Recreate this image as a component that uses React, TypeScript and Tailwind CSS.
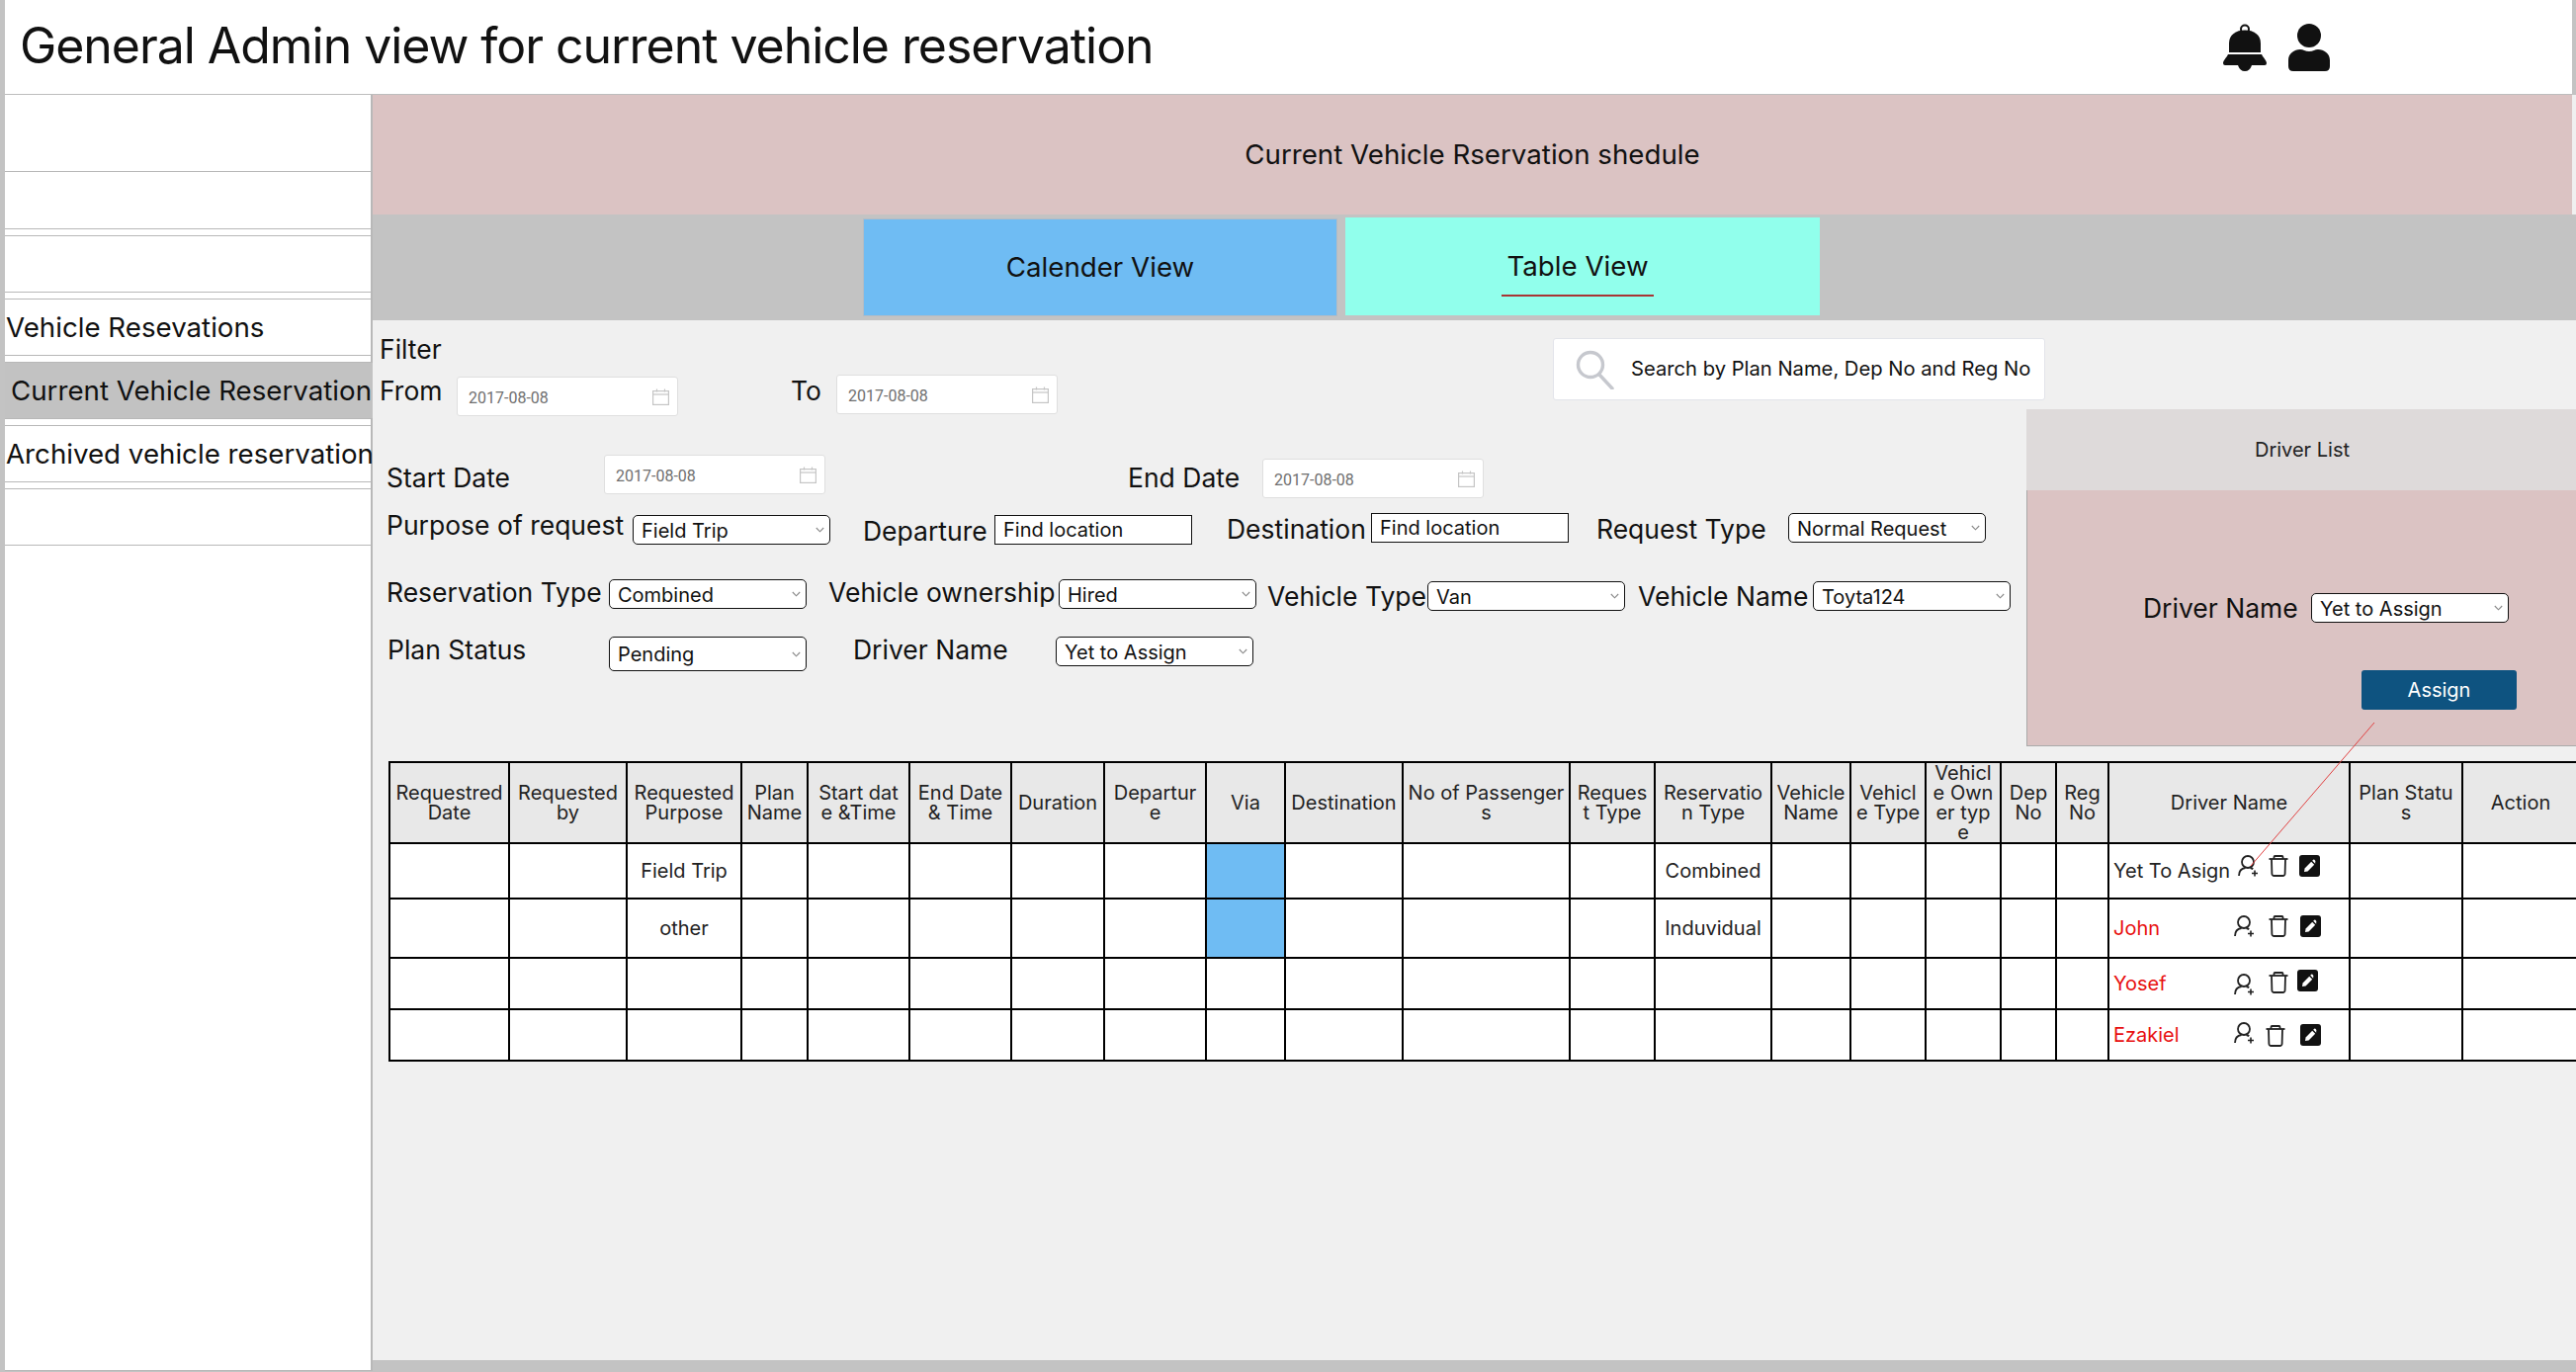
const sans = "font-['Liberation_Sans',Arial,sans-serif]";
const inter = "font-['Inter',sans-serif]";
const roboto = "font-['Roboto',sans-serif]";

const headers = [
  ["Requestred Date", "w-[121px] px-[3px]"],
  ["Requested by", "w-[119px] px-[3px]"],
  ["Requested Purpose", "w-[116px] px-[3px]"],
  ["Plan Name", "w-[67px] px-[3px]"],
  ["Start date &Time", "w-[103px] px-[5px]"],
  ["End Date & Time", "w-[103px] px-[3px]"],
  ["Duration", "w-[94px] px-[3px]"],
  ["Departure", "w-[103px] px-[5px]"],
  ["Via", "w-[80px] px-[3px]"],
  ["Destination", "w-[119px] px-[3px]"],
  ["No of Passengers", "w-[169px] px-[3px]"],
  ["Request Type", "w-[86px] px-[5px]"],
  ["Reservation Type", "w-[118px] px-[3px]"],
  ["Vehicle Name", "w-[80px] px-[3px]"],
  ["Vehicle Type", "w-[76px] px-[3px]"],
  ["Vehicle Owner type", "w-[76px] px-[5px]"],
  ["Dep No", "w-[56px] px-[3px]"],
  ["Reg No", "w-[53px] px-[3px]"],
  ["Driver Name", "w-[244px] px-[3px]"],
  ["Plan Status", "w-[114px] px-[5px]"],
  ["Action", "w-[118px] px-[3px]"],
];

const rows = [
  {
    height: "h-[54px]",
    purpose: "Field Trip",
    type: "Combined",
    via: true,
    driver: "Yet To Asign",
    driverColor: "text-[#222]",
    user: "ml-[4px] mt-[11px]",
    trash: "ml-[10px] mt-[11px]",
    edit: "ml-[11px] mt-[11px]",
  },
  {
    height: "h-[58px]",
    purpose: "other",
    type: "Induvidual",
    via: true,
    driver: "John",
    driverColor: "text-[#e81010]",
    user: "mt-[16px]",
    trash: "ml-[14px] mt-[16px]",
    edit: "ml-[12px] mt-[16px]",
  },
  {
    height: "h-[50px]",
    purpose: "",
    type: "",
    via: false,
    driver: "Yosef",
    driverColor: "text-[#e81010]",
    user: "mt-[15px]",
    trash: "ml-[14px] mt-[13px]",
    edit: "ml-[9px] mt-[11px]",
  },
  {
    height: "h-[50px]",
    purpose: "",
    type: "",
    via: false,
    driver: "Ezakiel",
    driverColor: "text-[#e81010]",
    user: "mt-[12px]",
    trash: "ml-[11px] mt-[15px]",
    edit: "ml-[15px] mt-[14px]",
  },
];

function BellIcon() {
  return (
    <svg width="44" height="48" viewBox="0 0 44 48" fill="#111">
      <circle cx="22" cy="5.5" r="4" fill="none" stroke="#111" strokeWidth="2" />
      <path d="M6 29V20C6 11 13 6.5 22 6.5C31 6.5 38 11 38 20V29Z" />
      <path d="M5 31H39C41 35 44 37 44 40Q44 42 42 42H2Q0 42 0 40C0 37 3 35 5 31Z" />
      <path d="M15 42H29Q27 48 22 48Q17 48 15 42Z" />
    </svg>
  );
}

function UserIcon() {
  return (
    <svg width="42" height="48" viewBox="0 0 42 48" fill="#111">
      <circle cx="21" cy="12" r="12" />
      <path d="M0 37C0 30 6 26 12 26C15 26 17 28 21 28C25 28 27 26 30 26C36 26 42 30 42 37V43Q42 48 37 48H5Q0 48 0 43Z" />
    </svg>
  );
}

function UserPlusIcon({ className }: { className: string }) {
  return (
    <svg className={`shrink-0 ${className}`} width="21" height="22" viewBox="0 0 21 22" fill="none" stroke="#222" strokeWidth="1.8">
      <circle cx="10" cy="7" r="6" />
      <path d="M1 21C1 16 4 13.5 7.5 13" />
      <path d="M12.5 13C13.5 13.2 14.5 13.6 15.2 14.2" />
      <path d="M17 15.5V21.5M14 18.5H20" strokeWidth="1.6" />
    </svg>
  );
}

function TrashIcon({ className }: { className: string }) {
  return (
    <svg className={`shrink-0 ${className}`} width="20" height="22" viewBox="0 0 20 22" fill="none" stroke="#222" strokeWidth="1.8">
      <path d="M0.5 4H19.5" />
      <path d="M5.5 4V2Q5.5 1 6.5 1H13.5Q14.5 1 14.5 2V4" />
      <path d="M3 4L3.4 19Q3.6 21 5.6 21H14.4Q16.4 21 16.6 19L17 4" />
    </svg>
  );
}

function EditIcon({ className }: { className: string }) {
  return (
    <svg className={`shrink-0 ${className}`} width="21" height="22" viewBox="0 0 21 22">
      <rect width="21" height="22" rx="3" fill="#111" />
      <path d="M5 17L5.6 13.4L12.2 6.8L15.2 9.8L8.6 16.4Z" fill="#fff" />
      <path d="M13.2 5.8L14.2 4.8Q14.8 4.3 15.4 4.8L16.2 5.7Q16.7 6.3 16.2 6.9L16.2 8.8Z" fill="#fff" />
    </svg>
  );
}

function CalendarIcon() {
  return (
    <svg className="absolute right-[8px] top-[11px]" width="17" height="17" viewBox="0 0 17 17" fill="none" stroke="#c5c5c5" strokeWidth="1.2">
      <rect x="0.6" y="2.6" width="15.8" height="13.8" />
      <path d="M0.6 6H16.4" />
      <path d="M4.5 0.5V3.5M12.5 0.5V3.5" />
    </svg>
  );
}

function DateField({ className }: { className: string }) {
  return (
    <div className={`relative h-[40px] w-[224px] shrink-0 rounded-[3px] border border-[#dfdfdf] bg-white ${className}`}>
      <input
        readOnly
        value="2017-08-08"
        className={`h-full w-full bg-transparent pl-[11px] pt-[2px] text-[16px] text-[#6f6f6f] outline-none ${roboto}`}
      />
      <CalendarIcon />
    </div>
  );
}

function SelectField({ value, className }: { value: string; className: string }) {
  return (
    <div className={`relative w-[200px] shrink-0 ${className}`}>
      <select
        defaultValue={value}
        className={`h-full w-full appearance-none rounded-[5px] border border-[#111] bg-white pl-[8px] text-[20px] text-[#111] outline-none ${inter}`}
      >
        <option>{value}</option>
      </select>
      <svg className="pointer-events-none absolute right-[6px] top-1/2 -translate-y-1/2" width="9" height="6" viewBox="0 0 9 6" fill="none" stroke="#888" strokeWidth="1.1">
        <path d="M0.8 1L4.5 4.8L8.2 1" />
      </svg>
    </div>
  );
}

function LocationField({ className }: { className: string }) {
  return (
    <input
      readOnly
      value="Find location"
      className={`h-[30px] w-[200px] shrink-0 border-[1.5px] border-[#111] bg-white pl-[8px] text-[20px] text-[#111] outline-none ${inter} ${className}`}
    />
  );
}

function Label({ text, className }: { text: string; className: string }) {
  return <span className={`shrink-0 whitespace-nowrap text-[26.5px] leading-[32px] text-[#111] ${inter} ${className}`}>{text}</span>;
}

export default function App() {
  return (
    <div className={`relative h-[1388px] w-[2606px] overflow-hidden bg-[#c3c3c3] ${sans}`}>
      <header className="ml-[5px] flex h-[96px] w-[2597px] items-center justify-between border-b border-[#bdbdbd] bg-white pl-[15px] pr-[245px]">
        <h1 className={`-mt-[4px] text-[50px] font-normal leading-none tracking-[-1.05px] text-[#111] ${inter}`}>General Admin view for current vehicle reservation</h1>
        <div className="flex items-center gap-[22px]">
          <BellIcon />
          <UserIcon />
        </div>
      </header>

      <div className="flex h-[1292px]">
        <aside className={`ml-[5px] flex h-[1291px] w-[372px] shrink-0 flex-col border-r-2 border-b border-[#b8b8b8] bg-white text-[27.7px] leading-[32px] text-[#111] ${inter}`}>
          <div className="h-[78px] border-b border-[#b8b8b8]" />
          <div className="h-[58px] border-b border-[#b8b8b8]" />
          <div className="mt-[6px] h-[58px] border-y border-[#b8b8b8]" />
          <div className="mt-[6px] flex h-[58px] items-center border-y border-[#b8b8b8] pl-[1px]">Vehicle Resevations</div>
          <div className="mt-[6px] flex h-[58px] w-[373px] items-center whitespace-nowrap border-y border-[#b8b8b8] bg-[#c2c2c2] pl-[6px]">Current Vehicle Reservation</div>
          <div className="mt-[6px] flex h-[58px] w-[373px] items-center whitespace-nowrap border-y border-[#b8b8b8] pl-[1px]">Archived vehicle reservation</div>
          <div className="mt-[6px] h-[58px] w-[373px] border-y border-[#b8b8b8]" />
        </aside>

        <main className="flex h-[1280px] min-w-0 flex-1 flex-col bg-[#f0f0f0]">
          <div className={`flex h-[121px] w-[2225px] items-center justify-center bg-[#dbc3c3] text-[27.7px] text-[#111] ${inter}`}>
            Current Vehicle Rservation shedule
          </div>

          <div className={`flex h-[107px] gap-[8px] bg-[#c3c3c3] pl-[496px] pt-[4px] text-[27.7px] ${inter}`}>
            <div className="flex h-[99px] w-[480px] items-center justify-center border border-[#b5bcc4] bg-[#6fbcf3] text-[#111]">Calender View</div>
            <div className="-mt-[1px] flex h-[99px] w-[480px] items-center justify-center bg-[#91ffec] text-[#111]">
              <span className="mr-[10px] mt-[10px] border-b-2 border-[#a83434] px-[5px] pb-[8px]">Table View</span>
            </div>
          </div>

          {/* filter + search */}
          <div className="flex h-[90px] items-start">
            <div className="w-[1194px] shrink-0 pl-[7px]">
              <div className="mt-[13px]">
                <Label text="Filter" className="block" />
              </div>
              <div className="flex items-start">
                <Label text="From" className="mt-[10px] w-[66px]" />
                <DateField className="ml-[12px] mt-[12px]" />
                <Label text="To" className="ml-[114px] mt-[10px] w-[30px]" />
                <DateField className="ml-[16px] mt-[10px]" />
              </div>
            </div>
            <div className="mt-[18px] flex h-[63px] w-[498px] shrink-0 items-center rounded-[3px] border border-[#e2e4ea] bg-white pl-[22px]">
              <svg width="40" height="40" viewBox="0 0 40 40" fill="none" stroke="#c6c8ce" strokeWidth="3.4">
                <circle cx="15" cy="15" r="12.5" />
                <path d="M24 25L37 39" strokeLinecap="round" />
              </svg>
              <span className={`ml-[16px] whitespace-nowrap text-[20.2px] text-[#111] ${inter}`}>Search by Plan Name, Dep No and Reg No</span>
            </div>
          </div>

          <div className="flex h-[341px]">
            {/* filter form */}
            <div className="w-[1673px] shrink-0">
              <div className="flex h-[93px] items-start pl-[14px]">
                <Label text="Start Date" className="mt-[53px] w-[128px]" />
                <DateField className="ml-[92px] mt-[46px]" />
                <Label text="End Date" className="ml-[306px] w-[116px] mt-[53px]" />
                <DateField className="ml-[20px] mt-[50px]" />
              </div>
              <div className="flex h-[70px] items-start pl-[14px]">
                <Label text="Purpose of request" className="mt-[8px] w-[237px]" />
                <SelectField value="Field Trip" className="ml-[12px] mt-[14px] h-[30px]" />
                <Label text="Departure" className="ml-[33px] mt-[14px] w-[124px]" />
                <LocationField className="ml-[9px] mt-[14px]" />
                <Label text="Destination" className="ml-[35px] mt-[12px] w-[140px]" />
                <LocationField className="ml-[6px] mt-[12px]" />
                <Label text="Request Type" className="ml-[28px] mt-[12px] w-[171px]" />
                <SelectField value="Normal Request" className="ml-[23px] mt-[12px] h-[30px]" />
              </div>
              <div className="flex h-[62px] items-start pl-[14px]">
                <Label text="Reservation Type" className="mt-[6px] w-[217px]" />
                <SelectField value="Combined" className="ml-[8px] mt-[9px] h-[30px]" />
                <Label text="Vehicle ownership" className="ml-[22px] mt-[6px] w-[225px]" />
                <SelectField value="Hired" className="ml-[8px] mt-[9px] h-[30px]" />
                <Label text="Vehicle Type" className="ml-[11px] mt-[10px] w-[158px]" />
                <SelectField value="Van" className="ml-[4px] mt-[11px] h-[30px]" />
                <Label text="Vehicle Name" className="ml-[13px] mt-[10px] w-[172px]" />
                <SelectField value="Toyta124" className="ml-[5px] mt-[11px] h-[30px]" />
              </div>
              <div className="flex items-start pl-[15px]">
                <Label text="Plan Status" className="mt-[2px] w-[144px]" />
                <SelectField value="Pending" className="ml-[80px] mt-[5px] h-[35px]" />
                <Label text="Driver Name" className="ml-[47px] mt-[2px] w-[157px]" />
                <SelectField value="Yet to Assign" className="ml-[48px] mt-[5px] h-[30px]" />
              </div>
            </div>

            {/* driver panel */}
            <div className="flex w-[556px] shrink-0 flex-col">
              <div className={`flex h-[82px] items-center justify-center bg-[#dedada] pl-[2px] text-[20px] text-[#222] ${inter}`}>Driver List</div>
              <div className="h-[259px] border-b border-l border-[#aaa] bg-[#dbc3c3]">
                <div className="flex items-center pl-[117px] pt-[103px]">
                  <Label text="Driver Name" className="w-[157px]" />
                  <SelectField value="Yet to Assign" className="ml-[13px] h-[30px]" />
                </div>
                <div className="mt-[47px] flex pl-[338px]">
                  <button type="button" className={`h-[40px] w-[157px] rounded-[3px] bg-[#0e5380] text-[20px] text-white ${inter}`}>Assign</button>
                </div>
              </div>
            </div>
          </div>

          <div className="pl-[16px] pt-[15px]">
            <table className={`w-[2215px] table-fixed border-collapse text-[20px] leading-[20px] text-[#222] ${inter}`}>
              <thead>
                <tr className="h-[82px] bg-[#e8e8e8]">
                  {headers.map(([label, width]) => (
                    <th key={label} className={`${width} break-all border-2 border-black text-center font-normal`}>{label}</th>
                  ))}
                </tr>
              </thead>
              <tbody>
                {rows.map((row) => (
                  <tr key={row.driver} className="bg-white">
                    {headers.map(([label]) => (
                      <td
                        key={label}
                        className={`border-2 border-black p-0 text-center ${label === "Via" && row.via ? "bg-[#6fbcf3]" : ""}`}
                      >
                        {label === "Requested Purpose" && row.purpose}
                        {label === "Reservation Type" && row.type}
                        {label === "Driver Name" && (
                          <div className={`flex ${row.height} pl-[4px]`}>
                            <span className={`w-[122px] shrink-0 self-center text-left ${row.driverColor}`}>{row.driver}</span>
                            <UserPlusIcon className={row.user} />
                            <TrashIcon className={row.trash} />
                            <EditIcon className={row.edit} />
                          </div>
                        )}
                      </td>
                    ))}
                  </tr>
                ))}
              </tbody>
            </table>
          </div>
        </main>
      </div>

      {/* red connector from Assign to the row icon */}
      <svg className="pointer-events-none absolute left-0 top-0" width="2606" height="1388" fill="none">
        <path d="M2402 731L2277 876" stroke="#e04040" strokeWidth="1" />
      </svg>
    </div>
  );
}
